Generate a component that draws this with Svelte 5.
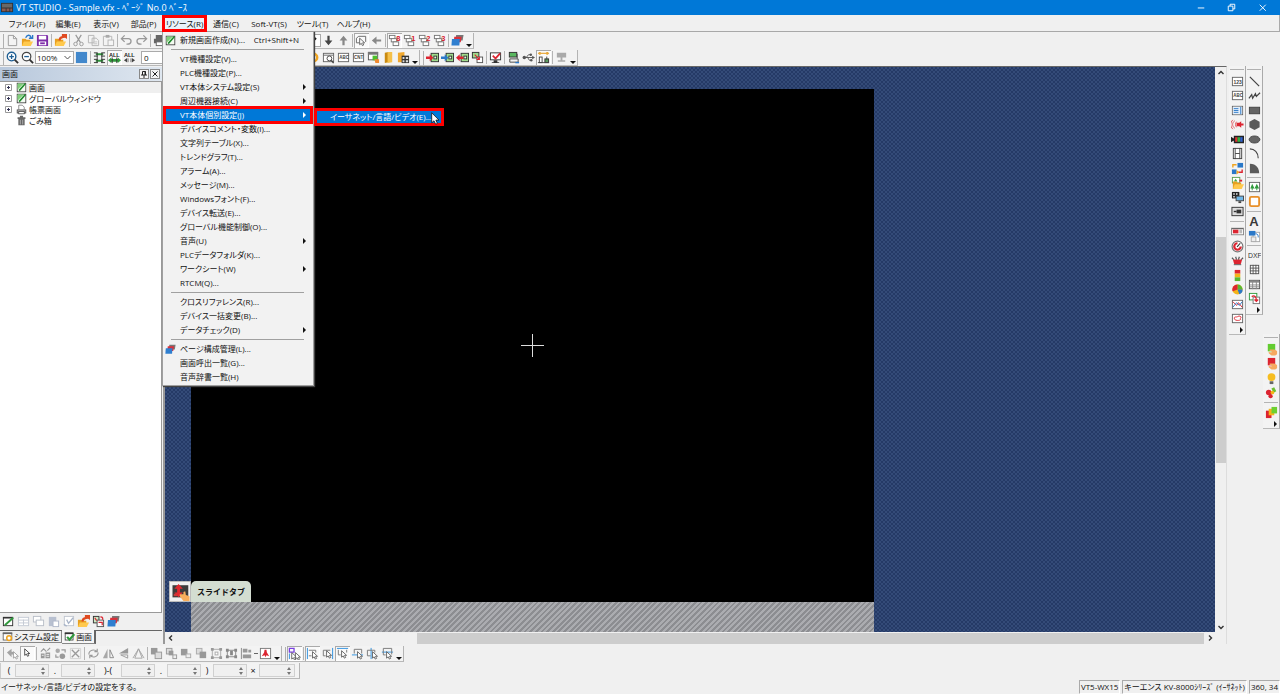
<script>
  const page = (x, y, w, h, s = '#555', f = '#fff') =>
    `<rect x="${x}" y="${y}" width="${w}" height="${h}" fill="${f}" stroke="${s}"/>`;
  const line = (d, s = '#444', w = 1) => `<path d="${d}" fill="none" stroke="${s}" stroke-width="${w}"/>`;
  const fill = (d, f = '#444') => `<path d="${d}" fill="${f}"/>`;
  const label = (t, x, y, size = 5, f = '#444', w = 700) =>
    `<text x="${x}" y="${y}" font-size="${size}" font-weight="${w}" fill="${f}" font-family="Liberation Sans, sans-serif">${t}</text>`;
  const pointer = (x, y, s = '#555') =>
    `<path transform="translate(${x} ${y})" d="M0 0V7L1.8 5.6L3 8L4.4 7.3L3.2 5H5.4Z" fill="#fff" stroke="${s}" stroke-width=".9"/>`;
  const folder = (x, y) =>
    `<g transform="translate(${x} ${y})">${fill('M0 0H4L5 1.2H9V8H0Z', '#e8a020')}${fill('M2 3H12L9.5 8H0Z', '#ffc94d')}</g>`;
  const stack = (a, b, c) => fill('M5.5 1H13.5L12.5 7H5Z', a) + fill('M3.5 3H11.5L10.5 9H3Z', b) + fill('M1 5.5H9.5L9 12.5H.5Z', c);
  const windows = (n) =>
    page(1.5, 1.5, 6, 3.5, '#777') + page(3.5, 5, 6, 3.5, '#777') + page(5.5, 8.5, 6, 4, '#777') + label(n, 9, 7, 8, '#d8202a');
  const chip = page(5.5, 2.5, 8, 9, '#333', '#9fdc8c') + page(8.5, 5.5, 3, 3, '#333', '#e8f7e2');
  const hand = (c) =>
    fill('M3 1H11V9H3Z', c) + fill('M5 7H10L13 8.5V12L11 13.5H7L4 11V9.8L7 10.2V8.6H5Z', '#f5a860');
  const box = page(1.5, 2.5, 11, 9, '#666');

  const icons = {
    app: fill('M0 2H13V12H0Z', '#333') + fill('M1 3H12V7H1Z', '#686868') + fill('M1 8H5V11H1ZM6 8H9V11H6ZM10 8H12V11H10Z', '#8a5a50'),
    doc: line('M2.5 1.5H8L11.5 5V12.5H2.5ZM8 1.5V5H11.5', '#999'),
    open: folder(1, 5) + line('M5 4C7 0 10 1 11 4M12.5 1V4.5H8.5', '#2a78c8', 1.5),
    save: fill('M1 1H12L13 2V13H1Z', '#7d2ba8') + fill('M3 2H11V6H3ZM3 8H11V12H3Z', '#fff') + line('M4.5 10H9.5', '#7d2ba8', 2),
    openRed: folder(1, 5) + fill('M5 7C5 3.5 7 2.5 8.5 2.5V0H14V5.5L12 4C9 4 7.5 5 7 7Z', '#e04a20'),
    cut: line('M4 1L9 9M10 1L5 9', '#999', 1.3) + `<circle cx="3.8" cy="10.8" r="1.9" fill="none" stroke="#999"/><circle cx="10.2" cy="10.8" r="1.9" fill="none" stroke="#999"/>`,
    copy: line('M1.5 1.5H7.5V9.5H1.5ZM5.5 4.5H10L12.5 7V12.5H5.5Z', '#b4b4b4') + line('M7 8.5H11M7 10.5H11', '#c4c4c4'),
    paste: line('M1.5 2.5H10.5V12.5H1.5Z', '#b4b4b4') + fill('M4 1H8V4H4Z', '#aaa') + page(6.5, 6.5, 6, 6, '#b4b4b4', '#f5f5f5'),
    undo: line('M2 5H9C13 5 13 11 8 11H7M5 1.5L1.5 5L5 8.5', '#999', 1.4),
    redo: line('M12 5H5C1 5 1 11 6 11H7M9 1.5L12.5 5L9 8.5', '#999', 1.4),
    print: fill('M3 1H11V5H3ZM1 5H13V10H1Z', '#666') + page(3.5, 8.5, 7, 4, '#666'),
    down: fill('M5.8 2H8.2V7H11.2L7 12L2.8 7H5.8Z', '#444'),
    up: fill('M5.8 12H8.2V7H11.2L7 2L2.8 7H5.8Z', '#888'),
    left: fill('M12 5.8V8.2H7V11.2L2 7L7 2.8V5.8Z', '#888'),
    pick: line('M1.5 4.5L4 2.5H11.5V8.5M1.5 4.5V9.5H5', '#666') + pointer(5, 4.5),
    win0: windows('8'), win1: windows('1'), win2: windows('2'), win3: windows('3'),
    stack: stack('#777', '#d8303a', '#2f7fd0'),
    zoomIn: `<circle cx="6" cy="6" r="4.6" fill="#fff" stroke="#1f5f94" stroke-width="1.5"/>` + line('M3.5 6H8.5M6 3.5V8.5', '#1f5f94', 1.4) + line('M9.3 9.3L13 13', '#333', 2),
    zoomOut: `<circle cx="6" cy="6" r="4.6" fill="#fff" stroke="#444" stroke-width="1.3"/>` + line('M3.5 6H8.5', '#1f5f94', 1.4) + line('M9.3 9.3L13 13', '#333', 2),
    blue: fill('M1 1H13V13H1Z', '#4288cc'),
    grid2: line('M3 3.5H11M3 10.5H11', '#2f9a3c', 2) + line('M1 2H5M9 2H13M1 5.5H5M9 5.5H13M1 9H5M9 9H13M1 12.5H5M9 12.5H13', '#333') + line('M4.5 2V13M9.5 2V13', '#333'),
    all1: label('ALL', 1, 6, 6, '#222') + fill('M0 10L3.5 7V8.5H10.5V7L14 10L10.5 13V11.5H3.5V13Z', '#2f9a3c') + line('M4.5 7V13M9.5 7V13', '#333'),
    all2: label('ALL', 1, 6, 6, '#222') + fill('M1 10L4.5 7.5V12.5ZM13 10L9.5 7.5V12.5Z', '#444') + line('M5.5 8V12M8.5 8V12', '#777'),
    gearY: `<circle cx="7" cy="7" r="4" fill="none" stroke="#f0a520" stroke-width="2.6"/>`,
    search: box + line('M1.5 4.5H12', '#666') + `<circle cx="8" cy="8" r="2.6" fill="#fff" stroke="#444"/>` + line('M10 10L12.5 13', '#444', 1.5),
    abc: box + label('ABC', 2.4, 9, 4.8), cnt: box + label('CNT', 2.2, 9, 4.8), n123: box + label('123', 2.6, 9.2, 5.4),
    screenG: page(1.5, 1.5, 10, 8, '#555') + fill('M1 1H12V4H1Z', '#777') + fill('M6 5H11V10H6Z', '#4cc02a') + fill('M8 9H13V13H9Z', '#f08a30'),
    book: fill('M3 2L7 1V12L3 13Z', '#c98a10') + fill('M6 1H11V12L6 13Z', '#f5c04a'),
    bookG: fill('M1 2L8 1V12H1Z', '#f0a830') + fill('M5 5H13V13H5Z', '#333') + fill('M6 6.5H8V8.5H6ZM9.5 6.5H12V8.5H9.5ZM6 10H8V12H6ZM9.5 10H12V12H9.5Z', '#ddd'),
    chipIn: chip + fill('M0 6H4V3.5L8 7.3L4 11V8.5H0Z', '#dc2430'),
    chipBl: chip + fill('M0 6H4V3.5L8 7.3L4 11V8.5H0Z', '#2a78c8'),
    chipOut: chip + fill('M8 6H4V3.5L0 7.3L4 11V8.5H8Z', '#dc2430'),
    chips: page(1.5, 1.5, 7, 6, '#333', '#9fdc8c') + page(6.5, 6.5, 6, 6, '#555') + line('M4 4L9 9M9 6V9.2H6', '#dc2430', 1.2),
    monitor: page(1.5, 2, 11, 7.5, '#333') + fill('M5 10H9V12H11V13H3V12H5Z', '#333') + line('M4 5L7 8L12 2.5', '#dc2430', 1.8),
    pcG: page(2.5, 1.5, 8, 5, '#333', '#5ab860') + line('M3 8.5H12V12H3ZM11 3V8', '#444') + line('M9 12.5H13', '#2a78c8', 1.5),
    usb: line('M2 7H12M4.5 7L7 4H9M6 7L8 10H10', '#555') + `<circle cx="2.5" cy="7" r="1.9" fill="#555"/><circle cx="9.5" cy="4" r="1.3" fill="#555"/><circle cx="10" cy="10" r="1.3" fill="#555"/>` + fill('M11 5L14 7L11 9Z', '#555'),
    netY: line('M1 2.5H13', '#e8a83a', 1.3) + fill('M2 1H4V4H2ZM10 1H12V4H10Z', '#e8a83a') + page(2.5, 6.5, 3, 6, '#444') + page(8.5, 8.5, 4, 4, '#333', '#5b9c60') + line('M10.5 6V9M1 12.5H13', '#444'),
    pcOff: fill('M2 2H12V7H2ZM6 7H8V10H6ZM3 10H11V11.5H3Z', '#aaa'),
    list: box + fill('M2 3H12V11H2Z', '#e4effb') + line('M3 5H8M3 7H8M3 9H8', '#2a78c8') + line('M10.5 3V11', '#2a78c8'),
    voice: line('M4 3C1 5 1 9 4 11M6 4C4.5 5.5 4.5 8.5 6 10M2 2C-1 5 -1 9 2 12', '#e05058') + fill('M6 5H9L11 3.5V10.5L9 9H6ZM11 6H13.5V8H11Z', '#dc2430'),
    video: fill('M0 4L3 6V8L0 10ZM3 3H14V11H3Z', '#222') + fill('M4.5 4.5H7V9.5H4.5Z', '#e03030') + fill('M7 4.5H10V9.5H7Z', '#30b040') + fill('M10 4.5H12.5V9.5H10Z', '#3060d0'),
    film: page(2.5, 1.5, 9, 11, '#444') + line('M4.5 1V13M9.5 1V13M4.5 7H9.5', '#444'),
    swap: fill('M7 1H13V6H7Z', '#2a78c8') + line('M2 6V3H6', '#f0a520', 1.5) + line('M12 8V11H8', '#dc2430', 1.5) + fill('M1 8H6V13H1Z', '#2a78c8') + fill('M6 8.5L9 11L6 13.5Z', '#f0a520'),
    pics: page(1.5, 1.5, 8, 6, '#5aa050') + fill('M3 6L5 3L7 6Z', '#3fae49') + folder(2, 6) + fill('M9 4H12V6H9Z', '#dc2430'),
    pcs: fill('M1 1H9V8H1Z', '#222') + fill('M2.5 2.5H4V4H2.5ZM5.5 2.5H7V4H5.5ZM2.5 5.5H4V7H2.5Z', '#fff') + page(5.5, 5.5, 8, 5, '#444', '#6db6e8') + fill('M8 11H11V13H8Z', '#444'),
    panel: page(1, 2.5, 12, 9, '#333', '#ddd') + fill('M6 5H11V9H6Z', '#333') + line('M3 7H6', '#333', 1.5),
    sw: page(.5, 3.5, 13, 7, '#888') + fill('M2 5H8V9H2Z', '#dc2430') + fill('M9 5H12V9H9Z', '#bbb') + line('M1 4H13', '#555'),
    gauge: `<circle cx="7" cy="7" r="5.8" fill="#fff" stroke="#777" stroke-width="1.3"/><path d="M7 3.5A3.5 3.5 0 1 0 10.5 7" fill="none" stroke="#dc2430" stroke-width="2.4"/>` + line('M6.5 7.5L10 3.5', '#333', 1.2),
    basket: fill('M2 6H12L10.5 11H3.5Z', '#dc2430') + line('M1 4L3 6M13 4L11 6M5 3L6 6M9 3L8 6', '#555', 1.3) + line('M3 11.5H11', '#555'),
    level: fill('M4 1H10V5H4Z', '#dc2430') + fill('M4 5H10V9H4Z', '#f4b41a') + fill('M4 9H10V13H4Z', '#58b830'),
    pie: `<circle cx="7" cy="7" r="5.5" fill="#f4b41a"/>` + fill('M7 7V1.5A5.5 5.5 0 0 1 12.5 7Z', '#58b830') + fill('M7 7V1.5A5.5 5.5 0 0 0 1.8 9Z', '#dc2430') + fill('M7 7H12.5A5.5 5.5 0 0 1 9 12.2Z', '#2a78c8'),
    trend: box + line('M2 4L6 8L8 5L12 10', '#dc2430') + line('M2 10L6 5L9 8L12 4', '#2a78c8'),
    plot: box + line('M4 8C2 4 7 6 7 5C10 3 12 6 10 7C12 9 6 10 4 8Z', '#dc2430'),
    diag: line('M2 2L12 12', '#444', 1.3),
    poly: line('M1 10L4 6L5 10L8 5L9 8L13 4', '#444', 1.3),
    rect: page(1.5, 3.5, 11, 7, '#444', '#666'),
    hex: fill('M7 1L12.5 4V10L7 13L1.5 10V4Z', '#5a5a5a'),
    oval: `<ellipse cx="7" cy="7" rx="5.8" ry="3.8" fill="#666" stroke="#444"/>`,
    arc: line('M2 2C7 2 11 6 11 12', '#444', 1.2),
    sector: fill('M2 2C9 2 12 7 12 12H2Z', '#5a5a5a'),
    trees: page(1.5, 1.5, 11, 10, '#666') + fill('M4.5 3L7 8H5V10H4V8H2.5ZM9.5 3L12 8H10V10H9V8H7Z', '#2f9a3c'),
    frame: `<rect x="2" y="2" width="10" height="10" rx="1.5" fill="#fff" stroke="#e8902a" stroke-width="2"/>`,
    letterA: label('A', 1.4, 12, 14, '#3a3a3a'),
    docs: page(5.5, 2.5, 7, 10, '#aaa') + page(3.5, 7.5, 5, 5, '#aaa', '#eee') + fill('M1 1H8V6H1Z', '#2a78c8') + line('M8 4C11 4 11 6 11 8', '#2a78c8'),
    dxf: label('DXF', 0, 10, 7.4, '#333', 400),
    grid: page(2.5, 2.5, 9, 9, '#555') + line('M5.5 2V12M8.5 2V12M2 5.5H12M2 8.5H12', '#555'),
    table: page(1.5, 2.5, 11, 9, '#555') + fill('M2 3H12V5H2Z', '#888') + line('M5 3V12M9 3V12M2 7.5H12M2 9.5H12', '#888'),
    link: page(1.5, 1.5, 8, 7, '#2f9a3c') + page(5.5, 5.5, 7, 7, '#777') + line('M4 5C7 3 9 5 9 9M7 8L9 10L11 8', '#dc2430', 1.4),
    handG: hand('#62cc30'), handR: hand('#dc2430'),
    bulb: `<circle cx="7" cy="5.5" r="4.2" fill="#f6bd20"/>` + fill('M5 10H9V13H5Z', '#666'),
    dots: line('M8 5L11 3.5', '#6cc030', 5) + `<circle cx="4" cy="7" r="3" fill="#dc2430"/><circle cx="6" cy="11" r="2.3" fill="#dc2430"/><circle cx="8" cy="7" r="2" fill="#f4b41a"/>`,
    squares: fill('M1 5H7V13H1Z', '#dc2430') + fill('M4 3H10V10H4Z', '#f4b41a') + fill('M7 1H13V8H7Z', '#6cd030'),
    pencil: page(1.5, 2.5, 10, 9, '#333') + line('M1 3H12', '#333', 1.6) + line('M3 11L12 3', '#2f9a3c', 2),
    leaf: page(1.5, 1.5, 11, 11, '#333', '#f4fbf2') + fill('M2 2H10L2 10Z', '#7fd07a') + line('M4 11L12 2', '#1f8a2c', 2),
    printDoc: line('M3.5 7V1.5H8L10.5 4V7', '#777') + page(1.5, 7.5, 11, 4, '#444', '#bbb') + page(3.5, 9.5, 7, 3, '#444'),
    bin: fill('M2 3H12V5H2ZM5 1H9V3H5ZM3 5H11V13H3Z', '#666') + line('M5.5 6V12M8.5 6V12', '#bbb'),
    tbl: page(1.5, 2.5, 11, 9, '#c4cad4') + line('M1.5 5.5H12M7 5V11M2 8.5H12', '#c4cad4'),
    copyB: page(1.5, 1.5, 8, 6, '#b8bec8') + page(4.5, 5.5, 8, 6, '#b8bec8'),
    pasteB: fill('M2 2H10V12H2Z', '#b8c0d0') + page(6.5, 6.5, 6, 6, '#b0b8ca'),
    checkB: page(2.5, 1.5, 10, 10, '#c0c6d0') + line('M5 5L7 9L12 3M2 10L5 12', '#a8b4c8', 1.4),
    hist: page(1.5, 1.5, 6, 7, '#333', '#cdeac6') + page(5.5, 5.5, 7, 7, '#555') + line('M3 3L5 6M9 2C12 2 12 4 11 5M7 8H11V11', '#dc2430', 1.3),
    sys: page(1.5, 2.5, 11, 9, '#555') + line('M1 3H13', '#666', 2) + `<circle cx="9" cy="9" r="3" fill="#fff" stroke="#f0a520" stroke-width="2"/>`,
    green: page(1.5, 2.5, 10, 9, '#333') + line('M1 3H12', '#333', 2) + line('M4 7.5L7 11L13 4', '#2f9a3c', 2.8),
    gUndo: fill('M1 6L6 2V5C9 5 11 7 11 9H8C8 8 7 8 6 8V11Z', '#a4a4a4') + pointer(8, 5, '#999'),
    arrow: pointer(4, 2, '#333'),
    gTune: fill('M2 7H6V12H2ZM7 6H12V12H7Z', '#999') + line('M2 5L5 2L8 5M9 4L12 1', '#999', 1.2) + line('M3 9H5M8 8H11M8 10H11', '#eee'),
    gMove: `<circle cx="4" cy="4" r="2.4" fill="#aaa"/><circle cx="9" cy="10" r="3" fill="#999"/>` + line('M8 3H12V6M2 8V11H5', '#999', 1.3),
    gX: line('M3 3L11 11M11 3L3 11', '#999', 1.4) + line('M1.5 1.5H12.5V12.5H1.5Z', '#d0d0d0'),
    gRot: line('M2 8C2 3 8 2 11 5M12 6C12 11 6 12 3 9M11 2V5H8M3 12V9H6', '#999', 1.2),
    gTri1: fill('M6 2V12H1Z', '#a8a8a8') + line('M8.5 3V11.5H12.5Z', '#888'),
    gTri2: fill('M12 1V7H2Z', '#999') + line('M4 8.5H11.5V12Z', '#999'),
    gTri3: line('M7 2L11 12H3ZM7 2L13 12M7 2L1 12', '#a4a4a4'),
    ord1: fill('M1 1H8V8H1Z', '#999') + page(5.5, 5.5, 7, 7, '#999', '#ddd'),
    ord2: page(1.5, 1.5, 6, 6, '#999', '#ddd') + fill('M4 4H9V9H4Z', '#999') + page(8.5, 8.5, 4, 4, '#999', '#eee'),
    ord3: fill('M1 2H8V9H1Z', '#999') + page(6.5, 7.5, 5, 4, '#aaa', '#eee'),
    ord4: page(1.5, 1.5, 6, 6, '#aaa', '#ddd') + fill('M5 5H12V12H5Z', '#999'),
    grp: line('M2.5 2.5H11.5V11.5H2.5Z', '#aaa') + fill('M1 1H4V4H1ZM10 1H13V4H10ZM1 10H4V13H1ZM10 10H13V13H10Z', '#999') + page(5.5, 5.5, 3, 3, '#aaa'),
    ungrp: line('M2.5 3.5H11.5V10.5H2.5Z', '#888') + fill('M1 2H4V5H1ZM10 2H13V5H10ZM1 9H4V12H1ZM10 9H13V12H10ZM5.5 4H8.5V9H5.5Z', '#888'),
    align: line('M1.5 1V13', '#888') + fill('M3 2H8V6H3ZM3 8H12V12H3ZM9 3H12V6H9Z', '#999'),
    redA: page(1.5, 1.5, 11, 11, '#777') + fill('M6 3H8L8.5 6L11 10L8 9L7 11L6 9L3 10L5.5 6Z', '#dc2430'),
    snapP: line('M1.5 1.5H6.5V5.5H1.5Z', '#7a40e0', 1.4) + line('M1.5 7V13', '#2a90e0') + pointer(4, 6) + pointer(8, 6),
    snapL: line('M1.5 1V13', '#2a90e0') + line('M3 3.5H10.5V6M3 9.5H6', '#777') + pointer(7, 5),
    snapR: line('M12.5 1V13', '#2a90e0') + line('M10 3.5H2.5V9.5H5', '#777') + pointer(6, 4),
    snapT: line('M1 1.5H13', '#2a90e0') + line('M2.5 3V8.5H5M11.5 3V6', '#777') + pointer(6, 4),
    snapB: line('M1 8.5H13', '#2a90e0') + line('M3.5 7V2.5H11.5V7', '#777') + pointer(7, 5),
    snapC: line('M5.5 1V13', '#2a90e0') + line('M1.5 3.5H9.5V6M1.5 3.5V9.5H5', '#777') + pointer(7, 5),
    snapM: line('M1 5.5H13', '#2a90e0') + line('M2.5 1.5H11.5V8M2.5 1.5V8.5H5', '#777') + pointer(6, 5),
    slide: fill('M0 1H13V11H0Z', '#3c3c3c') + fill('M1 8H4V10H1Z', '#c83a3a') + fill('M5 0L8.5 4H6.2V7H8.5L5 11L1.5 7H3.8V4H1.5Z', '#e02830') + fill('M6 8.5H9V6.5L10.5 6L11 9L14 10V14H9L6 10Z', '#f8ae5c'),
    min: line('M3 7.5H10', '#fff'),
    restore: line('M3.5 5.5H8.5V10.5H3.5ZM5.5 5.5V3.5H10.5V8.5H8.5', '#fff'),
    close: line('M4 4L10.5 10.5M10.5 4L4 10.5', '#fff'),
  };

  const menus = ['ファイル(F)', '編集(E)', '表示(V)', '部品(P)', 'リソース(R)', '通信(C)', 'Soft-VT(S)', 'ツール(T)', 'ヘルプ(H)'];
  const entries = [
    { t: '新規画面作成(N)...', key: 'Ctrl+Shift+N', icon: 'leaf' },
    null,
    { t: 'VT機種設定(V)...' },
    { t: 'PLC機種設定(P)...' },
    { t: 'VT本体システム設定(S)', sub: true },
    { t: '周辺機器接続(C)', sub: true },
    { t: 'VT本体個別設定(J)', sub: true, on: true },
    { t: 'デバイスコメント・変数(I)...' },
    { t: '文字列テーブル(X)...' },
    { t: 'トレンドグラフ(T)...' },
    { t: 'アラーム(A)...' },
    { t: 'メッセージ(M)...' },
    { t: 'Windowsフォント(F)...' },
    { t: 'デバイス転送(E)...' },
    { t: 'グローバル機能制御(O)...' },
    { t: '音声(U)', sub: true },
    { t: 'PLCデータフォルダ(K)...' },
    { t: 'ワークシート(W)', sub: true },
    { t: 'RTCM(Q)...' },
    null,
    { t: 'クロスリファレンス(R)...' },
    { t: 'デバイス一括変更(B)...' },
    { t: 'データチェック(D)', sub: true },
    null,
    { t: 'ページ構成管理(L)...', icon: 'stack' },
    { t: '画面呼出一覧(G)...' },
    { t: '音声辞書一覧(H)' },
  ];
  const tree = [
    { t: '画面', icon: 'leaf', plus: true, on: true },
    { t: 'グローバルウィンドウ', icon: 'leaf', plus: true },
    { t: '帳票画面', icon: 'printDoc', plus: true },
    { t: 'ごみ箱', icon: 'bin' },
  ];
  const pressed = ['all1', 'pick', 'win0', 'netY', 'arrow', 'snapP', 'snapL', 'snapT'];
</script>

{#snippet icon(name)}
  <svg class="icon" viewBox="0 0 14 14" aria-hidden="true">{@html icons[name]}</svg>
{/snippet}

{#snippet tools(list)}
  {#each list.split(' ') as n}
    {#if n === '|'}
      <i class="sep"></i>
    {:else if n === '>'}
      <button class="more" aria-label="more"></button>
    {:else}
      <button class="tool" class:pressed={pressed.includes(n)} aria-label={n}>{@render icon(n)}</button>
    {/if}
  {/each}
{/snippet}

{#snippet spin(name)}
  <span class="spin"><input aria-label={name} /><span class="steps"><button aria-label="increase"></button><button class="dn" aria-label="decrease"></button></span></span>
{/snippet}

<div class="app">
  <header class="title">
    {@render icon('app')}
    <h1>VT STUDIO - Sample.vfx - ﾍﾟｰｼﾞ No.0 ﾍﾞｰｽ</h1>
    <button aria-label="minimize">{@render icon('min')}</button>
    <button aria-label="restore">{@render icon('restore')}</button>
    <button aria-label="close">{@render icon('close')}</button>
  </header>

  <nav class="menubar">
    {#each menus as m, i}
      <div class="menu-slot">
        <button class="menu-name" class:open={i === 4}>{m}</button>
        {#if i === 4}
          <div class="menu" role="menu">
            {#each entries as e}
              {#if e}
                <div class="entry-slot">
                  <button class="entry" class:on={e.on} role="menuitem">
                    <span class="mark">{#if e.icon}{@render icon(e.icon)}{/if}</span>
                    <span class="name">{e.t}</span>
                    {#if e.key}<span class="key">{e.key}</span>{/if}
                    {#if e.sub}<i class="tri"></i>{/if}
                  </button>
                  {#if e.on}
                    <button class="submenu" role="menuitem">
                      イーサネット/言語/ビデオ(E)...
                      <svg class="cursor" viewBox="0 0 9 13" aria-hidden="true"><path d="M.7 .8V10.8L3 8.8L4.6 12.2L6.4 11.4L4.9 8.1H8Z" fill="#fff" stroke="#111" stroke-width=".8" /></svg>
                    </button>
                  {/if}
                </div>
              {:else}
                <hr />
              {/if}
            {/each}
          </div>
        {/if}
      </div>
    {/each}
  </nav>

  <div class="row">
    <div class="bar">
      <i class="grip"></i>
      {@render tools('doc open save | openRed | cut copy paste | undo redo | print')}
      <select class="wide" aria-label="part"><option></option></select>
      {@render tools('down up | pick left | win0 win1 win2 win3 | stack >')}
    </div>
  </div>
  <div class="row">
    <div class="bar">
      <i class="grip"></i>
      {@render tools('zoomIn zoomOut')}
      <select class="zoom" aria-label="zoom"><option>100%</option></select>
      {@render tools('blue | grid2 all1 all2')}
      <input class="num" aria-label="number" value="0" />
      {@render tools('gearY search abc cnt screenG book bookG >')}
    </div>
    <div class="bar">
      <i class="grip"></i>
      {@render tools('chipIn chipBl chipOut chips | monitor | pcG usb netY | pcOff >')}
    </div>
  </div>

  <main>
    <aside>
      <div class="pane-title"><h2>画面</h2>
        <button aria-label="pin"><svg viewBox="0 0 8 8"><path d="M2.5 1.5H5.5V5M2.5 1.5V5M1 5H7M4 5V8M5 1V5" fill="none" stroke="#222" /></svg></button>
        <button aria-label="close pane"><svg viewBox="0 0 8 8"><path d="M1.5 1.5L6.5 6.5M6.5 1.5L1.5 6.5" stroke="#222" /></svg></button>
      </div>
      <ul class="tree">
        {#each tree as n}
          <li>
            {#if n.plus}<button class="plus" aria-label="expand"><svg viewBox="0 0 7 7"><path d="M.5 .5H6.5V6.5H.5Z" fill="#fff" stroke="#999" /><path d="M2 3.5H5M3.5 2V5" stroke="#335" /></svg></button>{:else}<i class="plus"></i>{/if}
            {@render icon(n.icon)}
            <span class:on={n.on}>{n.t}</span>
          </li>
        {/each}
      </ul>
      <div class="pane-tools">{@render tools('pencil tbl copyB pasteB checkB openRed hist stack')}</div>
      <div class="tabs">
        <button>{@render icon('sys')}システム設定</button>
        <button class="on">{@render icon('green')}画面</button>
      </div>
    </aside>

    <section class="editor">
      <div class="canvas">
        <div class="stage">
          <div class="screen"><svg class="cross" viewBox="0 0 23 23" aria-hidden="true"><path d="M11.5 0V23M0 11.5H23" stroke="#ddd" /></svg></div>
          <div class="hatch"></div>
          <div class="slide"><span class="slide-icon">{@render icon('slide')}</span><button>スライドタブ</button></div>
        </div>
      </div>
      <div class="vscroll">
        <button aria-label="scroll up"><svg viewBox="0 0 8 8"><path d="M1.5 5L4 2.5L6.5 5" /></svg></button>
        <i class="thumb"></i>
        <button aria-label="scroll down"><svg viewBox="0 0 8 8"><path d="M1.5 3L4 5.5L6.5 3" /></svg></button>
      </div>
      <div class="hscroll">
        <button aria-label="scroll left"><svg viewBox="0 0 8 8"><path d="M5 1.5L2.5 4L5 6.5" /></svg></button>
        <i class="thumb"></i>
        <button aria-label="scroll right"><svg viewBox="0 0 8 8"><path d="M3 1.5L5.5 4L3 6.5" /></svg></button>
      </div>
    </section>

    <div class="dock">
      <div class="bar v"><i class="grip"></i>{@render tools('n123 abc list voice video film swap pics pcs panel | sw gauge basket level pie trend plot >')}</div>
      <div class="bar v"><i class="grip"></i>{@render tools('diag poly rect hex oval arc sector | trees frame | letterA docs | dxf grid table link >')}</div>
      <div class="bar v low"><i class="grip"></i>{@render tools('handG handR bulb dots | squares >')}</div>
    </div>
  </main>

  <div class="row">
    <div class="bar">
      <i class="grip"></i>
      {@render tools('gUndo arrow | gTune gMove gX | gRot gTri1 gTri2 gTri3 | ord1 ord2 ord3 ord4 grp ungrp align')}
      <i class="dash"></i>
      {@render tools('redA >')}
    </div>
    <div class="bar">
      <i class="grip"></i>
      {@render tools('snapP | snapL snapR snapT snapB snapC snapM >')}
    </div>
  </div>
  <div class="row">
    <div class="bar coords">
      <span>(</span>{@render spin('x1')}<span>.</span>{@render spin('y1')}<span class="mid">)-(</span>{@render spin('x2')}<span>.</span>{@render spin('y2')}<span>)</span>{@render spin('width')}<span>×</span>{@render spin('height')}
    </div>
  </div>

  <footer>
    <p>イーサネット/言語/ビデオの設定をする。</p>
    <span>VT5-WX15</span>
    <span>キーエンス KV-8000ｼﾘｰｽﾞ (ｲｰｻﾈｯﾄ)</span>
    <span>360, 34</span>
  </footer>
</div>

<style>
  :global(body) { margin: 0; background: #f0f0f0; }
  .app {
    display: flex; flex-direction: column; min-height: 100vh; background: #f0f0f0; color: #111;
    font: 8px/12px "Open Sans", "Noto Sans CJK JP", sans-serif; font-feature-settings: "palt"; white-space: nowrap;
  }
  .app :global(*) { box-sizing: border-box; }
  button { font: inherit; font-feature-settings: inherit; color: inherit; border: 0; padding: 0; margin: 0; background: none; }
  input, select { font: inherit; color: inherit; margin: 0; border-radius: 0; }
  h1, h2, p, ul { margin: 0; padding: 0; font: inherit; list-style: none; }
  .icon { width: 14px; height: 14px; flex: none; display: block; }

  .title { display: flex; align-items: center; height: 15px; padding: 0 8px 0 1px; background: #0078d7; color: #fff; }
  .title h1 { flex: 1; margin-left: 2px; font-size: 9px; }
  .title .icon { width: 13px; height: 13px; }
  .title button { width: 30px; display: flex; justify-content: center; }
  .title button:last-child { width: 20px; margin-left: 6px; }

  .menubar {
    display: grid; grid-template-columns: 44px 38px 38px 37px 45px 38px 48px 39px 43px; height: 17px; padding-left: 5px;
    border-right: 1px solid #aaa; border-bottom: 1px solid #a8a8a8;
  }
  .menu-slot { position: relative; display: flex; }
  .menu-name { flex: 1; display: flex; align-items: center; justify-content: center; }
  .menu-name.open { border: 3px solid #f00; height: 17px; background: #e8f1fa; }
  .menu {
    position: absolute; z-index: 5; top: 16px; left: 0; width: 152px; padding: 1px 2px; background: #f2f2f2;
    border: 1px solid #a0a0a0; box-shadow: 1px 1px 1px #444;
  }
  .menu-name.open { position: relative; z-index: 6; }
  .entry-slot { position: relative; }
  .entry { width: 100%; height: 14px; display: flex; align-items: center; text-align: left; }
  .mark { width: 15px; }
  .mark .icon { width: 11px; height: 11px; }
  .name { flex: 1; }
  .key { margin-right: 12px; }
  .tri { border: 3px solid transparent; border-left: 3px solid #111; border-right: 0; margin-right: 5px; }
  .entry.on { background: #0078d7; color: #fff; outline: 3px solid #f00; outline-offset: -1px; }
  .entry.on .tri { border-left-color: #fff; }
  .menu hr { margin: 2px 7px 2px 6px; border: 0; border-top: 1px solid #a0a0a0; }
  .submenu {
    position: absolute; z-index: 6; left: 149px; top: 0; width: 130px; height: 18px; padding: 0 0 0 13px;
    display: flex; align-items: center; color: #fff; background: #0078d7; border: 3px solid #f00;
  }
  .cursor { position: absolute; right: 1px; top: 1px; width: 9px; height: 13px; }

  .row { display: flex; align-items: flex-start; padding-top: 1px; }
  .bar { display: flex; align-items: center; height: 16px; background: #f3f3f3; border-right: 1px solid #b4b4b4; border-bottom: 1px solid #b8b8b8; }
  .grip { width: 5px; height: 14px; flex: none; background: linear-gradient(90deg, transparent 3px, #b0b0b0 3px, #b0b0b0 4px, transparent 4px); }
  .tool { width: 15px; height: 15px; flex: none; display: flex; align-items: center; justify-content: center; }
  .tool .icon { width: 13px; height: 13px; }
  .pressed { background: #fafafa; box-shadow: inset 1px 1px #aaa, inset -1px -1px #fff; }
  .sep { width: 3px; height: 13px; flex: none; background: linear-gradient(90deg, transparent 1px, #b4b4b4 1px, #b4b4b4 2px, transparent 2px); }
  .more { width: 8px; flex: none; height: 13px; display: flex; align-items: flex-end; justify-content: center; }
  .more::after { content: ""; border: 3px solid transparent; border-top-color: #111; border-bottom: 0; }
  select { height: 13px; border: 1px solid #aaa; background: #fff; padding: 0 0 0 1px; }
  .wide { width: 154px; }
  .zoom {
    width: 39px; appearance: none; line-height: 10px; color: #222;
    background: #fff url("data:image/svg+xml,%3Csvg xmlns='http://www.w3.org/2000/svg' width='7' height='5'%3E%3Cpath d='M.5 1L3.5 4L6.5 1' fill='none' stroke='%23555'/%3E%3C/svg%3E") no-repeat right 2px center;
  }
  .num { width: 165px; margin: 0 0 0 4px; height: 13px; border: 1px solid #aaa; padding: 0 2px; background: #fff; }

  main { flex: 1; display: flex; align-items: stretch; }
  aside { width: 162px; display: flex; flex-direction: column; }
  .pane-title { display: flex; align-items: center; gap: 1px; height: 14px; margin-top: 1px; padding: 0 2px; background: linear-gradient(90deg, #b8c8dc, #dfe7f0); }
  .pane-title h2 { flex: 1; }
  .pane-title button { width: 10px; height: 10px; display: flex; align-items: center; justify-content: center; background: #f4f4f4; border: 1px solid #888; }
  .pane-title svg { width: 8px; height: 8px; flex: none; }
  .tree { flex: 1; padding: 0 0 0 5px; background: #fff; border: 1px solid #999; border-left: 0; }
  .tree li { display: flex; align-items: center; height: 11px; }
  .plus { width: 7px; height: 7px; margin-right: 4px; display: flex; }
  .plus svg { width: 7px; height: 7px; }
  .tree .icon { width: 11px; height: 11px; }
  .tree span { flex: 1; padding-left: 2px; line-height: 11px; }
  .tree .on { background: #efefef; }
  .pane-tools { display: flex; padding: 1px 0 0 1px; height: 17px; }
  .tabs { display: flex; border-top: 1px solid #666; height: 15px; }
  .tabs button { display: flex; align-items: center; gap: 1px; padding: 0 2px; border-right: 1px solid #888; border-bottom: 1px solid #888; height: 12px; }
  .tabs .icon { width: 11px; height: 11px; }
  .tabs .on { height: 14px; margin-top: -1px; background: #f6f6f6; border-right: 2px solid #666; }

  .editor {
    flex: 1; display: grid; grid-template: 1fr 12px / 1fr 11px; margin: 0 0 1px 1px;
    border-top: 1px solid #666; border-left: 2px solid #999; border-right: 1px solid #ddd;
  }
  .canvas { display: flex; padding: 22px 0 0 26px; background: #2f4672 repeating-conic-gradient(#253a66 0 25%, #344b78 0 50%) 0 0 / 4px 4px; }
  .stage { position: relative; flex: 0 0 66.7%; display: flex; flex-direction: column; }
  .screen { flex: 1; background: #000; display: flex; align-items: center; justify-content: center; }
  .cross { width: 23px; height: 23px; }
  .hatch { height: 30px; background: repeating-linear-gradient(135deg, #8c8d91 0 2px, #abacb0 2px 4px); }
  .slide { position: absolute; left: -22px; bottom: 30px; display: flex; }
  .slide-icon { width: 22px; height: 21px; padding: 2px; background: #f0f0f0; border: 1px solid #bbb; }
  .slide-icon .icon { width: 18px; height: 17px; }
  .slide button { height: 21px; padding: 0 6px; background: #d3ddd1; color: #111; font-weight: 700; font-feature-settings: normal; border-radius: 5px 5px 0 0; }
  .vscroll, .hscroll { display: flex; align-items: center; background: #f0f0f0; }
  .vscroll { flex-direction: column; }
  .vscroll button, .hscroll button { width: 11px; height: 11px; display: flex; align-items: center; justify-content: center; }
  .vscroll svg, .hscroll svg { width: 8px; height: 8px; fill: none; stroke: #333; stroke-width: 1.4; }
  .thumb { background: #cdcdcd; }
  .vscroll .thumb { width: 10px; height: 40%; margin: auto 0; }
  .hscroll .thumb { height: 11px; width: 75%; margin-left: auto; }

  .dock { display: flex; align-items: flex-start; width: 53px; padding-left: 2px; }
  .bar.v { flex-direction: column; width: 17px; height: auto; border-right: 1px solid #aaa; }
  .v .grip { width: 14px; height: 8px; background: linear-gradient(transparent 3px, #b0b0b0 3px, #b0b0b0 4px, transparent 4px); }
  .v .tool { height: 14px; }
  .v .tool:nth-child(odd) { height: 15px; }
  .v .sep { width: 14px; height: 5px; background: linear-gradient(transparent 2px, #b4b4b4 2px, #b4b4b4 3px, transparent 3px); }
  .v .more { width: 15px; height: 8px; align-items: center; justify-content: flex-end; padding-right: 2px; }
  .v .more::after { border: 3px solid transparent; border-left-color: #111; border-right: 0; }
  .bar.low { margin-top: 268px; }

  .dash { width: 4px; height: 1px; background: #666; }
  .coords { padding: 0 4px 0 2px; border-left: 1px solid #ccc; font-size: 9px; }
  .coords > span { width: 12px; text-align: center; }
  .coords > .mid { width: 26px; }
  .coords > .spin { display: flex; width: 34px; height: 13px; background: #f0f0f0; border: 1px solid #d0d0d0; }
  .coords > .spin:last-child { width: 36px; }
  .spin input { flex: 1; min-width: 0; border: 0; background: none; padding: 0; }
  .steps { width: 11px; display: flex; flex-direction: column; align-items: center; justify-content: center; gap: 2px; }
  .steps button { border: 2px solid transparent; border-top: 0; border-bottom: 3px solid #777; }
  .steps .dn { border-bottom: 0; border-top: 3px solid #777; }

  footer { display: flex; align-items: center; gap: 2px; height: 15px; }
  footer p { flex: 1; padding-left: 1px; }
  footer span { padding: 0 1px; border: 1px solid #aaa; border-right-color: #fff; border-bottom-color: #fff; }
</style>
